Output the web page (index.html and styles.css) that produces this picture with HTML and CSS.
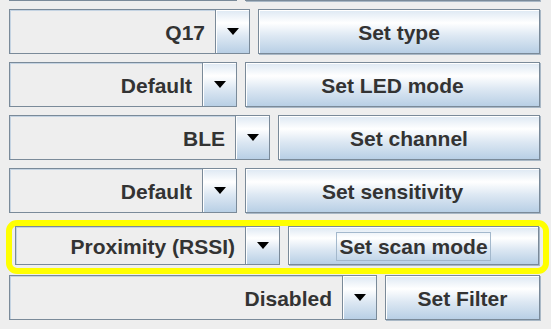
FILE: index.html
```html
<!DOCTYPE html>
<html lang="en">
<head>
  <meta charset="UTF-8">
  <meta name="viewport" content="width=device-width, initial-scale=1.0">
  <title>Device Settings</title>
  <link rel="stylesheet" href="styles.css">
</head>
<body>
  <div class="panel">
    <!-- Row above, mostly scrolled out of view -->
    <div class="row">
      <div class="combo combo-medium">
        <div class="value"></div>
        <div class="arrow"><span class="tri"></span></div>
      </div>
      <div class="button"></div>
    </div>

    <div class="row">
      <div class="combo combo-type">
        <div class="value">Q17</div>
        <div class="arrow"><span class="tri"></span></div>
      </div>
      <div class="button">Set type</div>
    </div>

    <div class="row">
      <div class="combo combo-medium">
        <div class="value">Default</div>
        <div class="arrow"><span class="tri"></span></div>
      </div>
      <div class="button">Set LED mode</div>
    </div>

    <div class="row">
      <div class="combo combo-channel">
        <div class="value">BLE</div>
        <div class="arrow"><span class="tri"></span></div>
      </div>
      <div class="button">Set channel</div>
    </div>

    <div class="row">
      <div class="combo combo-medium">
        <div class="value">Default</div>
        <div class="arrow"><span class="tri"></span></div>
      </div>
      <div class="button">Set sensitivity</div>
    </div>

    <!-- Highlighted row -->
    <div class="highlight">
      <div class="row row-small">
        <div class="combo combo-scan">
          <div class="value">Proximity (RSSI)</div>
          <div class="arrow"><span class="tri"></span></div>
        </div>
        <div class="button"><span class="focus">Set scan mode</span></div>
      </div>
    </div>

    <div class="row">
      <div class="combo combo-filter">
        <div class="value">Disabled</div>
        <div class="arrow"><span class="tri"></span></div>
      </div>
      <div class="button">Set Filter</div>
    </div>
  </div>
</body>
</html>
```

FILE: styles.css
```css
html, body {
  margin: 0;
  height: 100%;
  background: #eeeeee;
  overflow: hidden;
}
body {
  font-family: "Liberation Sans", Arial, sans-serif;
  font-weight: bold;
  font-size: 21px;
  color: #333333;
}
.panel {
  display: flex;
  flex-direction: column;
  gap: 8px;
  padding: 0 11px 0 9px;
  margin-top: -44px;
}
.row {
  display: flex;
  gap: 8px;
  height: 45px;
}
.row-small {
  height: 39px;
}
.combo {
  display: flex;
  flex: none;
}
.combo-type { width: 241px; }
.combo-medium { width: 228px; }
.combo-channel { width: 261px; }
.combo-scan { width: 265px; }
.combo-filter { width: 368px; }
.combo .value {
  flex: 1;
  display: flex;
  align-items: center;
  justify-content: flex-end;
  padding: 2px 10px 0 0;
  background: #eeeeee;
  border: 1px solid #7a8a99;
  box-shadow: inset 1px 1px 0 #c4d3e2;
  white-space: nowrap;
}
.combo .arrow {
  width: 33px;
  display: flex;
  align-items: center;
  justify-content: center;
  border: 1px solid #7a8a99;
  border-left: 0;
  background: linear-gradient(#dde8f3 0%, #ffffff 30%, #dde8f3 60%, #b8cfe5 100%);
  box-shadow: inset 1px 1px 0 #ffffff;
}
.tri {
  width: 0;
  height: 0;
  border-left: 6px solid transparent;
  border-right: 6px solid transparent;
  border-top: 7px solid #000000;
}
.button {
  flex: 1;
  display: flex;
  align-items: center;
  justify-content: center;
  padding-top: 2px;
  border: 1px solid #7a8a99;
  background: linear-gradient(#dde8f3 0%, #ffffff 30%, #dde8f3 60%, #b8cfe5 100%);
  box-shadow: inset 1px 1px 0 #ffffff, 1px 1px 0 #a9b8c6;
  white-space: nowrap;
}
.focus {
  border: 1px solid #a3b8cc;
  padding: 2px 2px 1px;
}
.highlight {
  border: 6px solid #ffff00;
  border-radius: 11px;
  padding: 0 4px 3px 3px;
  margin: -1px -9px -7px -3px;
}
```
